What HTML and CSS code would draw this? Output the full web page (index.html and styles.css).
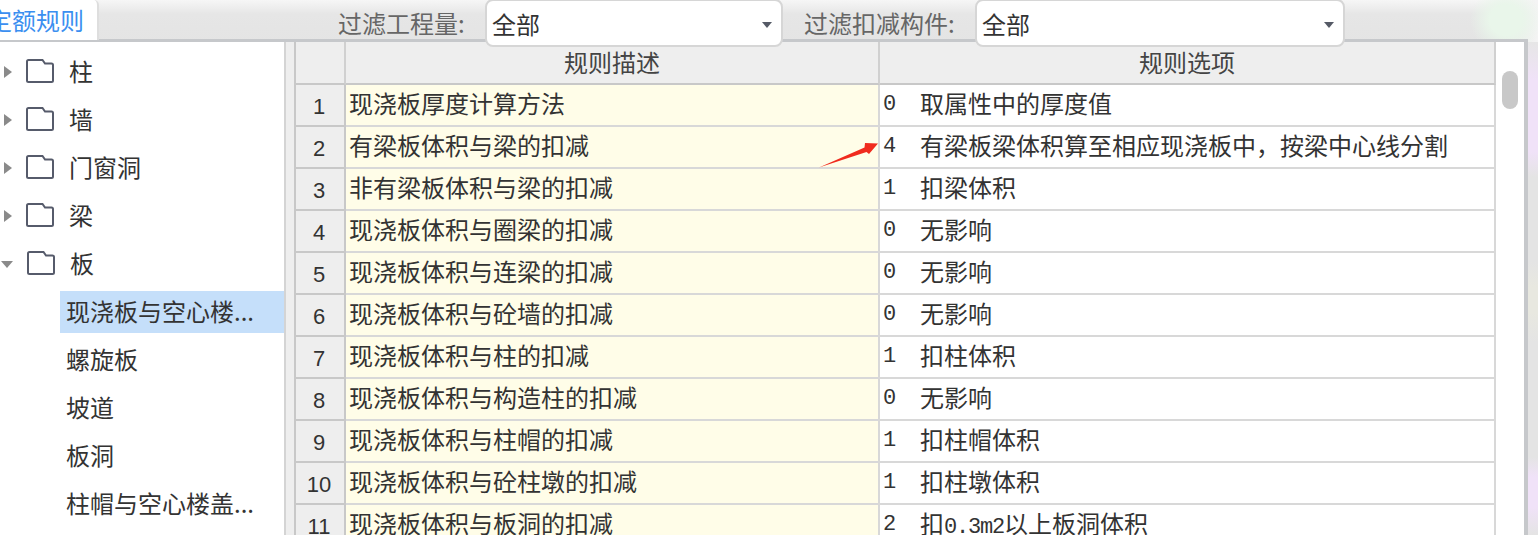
FILE: index.html
```html
<!DOCTYPE html>
<html lang="zh-CN">
<head>
<meta charset="utf-8">
<title>定额规则</title>
<link rel="stylesheet" href="styles.css">
</head>
<body>
<svg class="defs" width="0" height="0"><symbol id="folder" viewBox="0 0 28 24"><path d="M1 2.500a1.500 1.500 0 0 1 1.500-1.500h14l2.500 3.500h6.500a1.500 1.500 0 0 1 1.500 1.500v15.500a1.500 1.500 0 0 1-1.500 1.500h-23a1.500 1.500 0 0 1-1.500-1.500z"/></symbol></svg>
<div class="page">
  <header class="topbar">
    <div class="tab"><span class="tab-text">定额规则</span></div>
    <span class="filter-label first">过滤工程量:</span>
    <div class="combo combo-a"><span>全部</span><i class="caret"></i></div>
    <span class="filter-label second">过滤扣减构件:</span>
    <div class="combo combo-b"><span>全部</span><i class="caret"></i></div>
  </header>
  <main class="body">
    <nav class="tree">
      <div class="node"><i class="tri"></i><svg class="folder"><use href="#folder"/></svg><span>柱</span></div>
      <div class="node"><i class="tri"></i><svg class="folder"><use href="#folder"/></svg><span>墙</span></div>
      <div class="node"><i class="tri"></i><svg class="folder"><use href="#folder"/></svg><span>门窗洞</span></div>
      <div class="node"><i class="tri"></i><svg class="folder"><use href="#folder"/></svg><span>梁</span></div>
      <div class="node"><i class="tri open"></i><svg class="folder"><use href="#folder"/></svg><span>板</span></div>
      <div class="leaf selected"><span>现浇板与空心楼...</span></div>
      <div class="leaf"><span>螺旋板</span></div>
      <div class="leaf"><span>坡道</span></div>
      <div class="leaf"><span>板洞</span></div>
      <div class="leaf"><span>柱帽与空心楼盖...</span></div>
    </nav>
    <div class="splitter"></div>
    <section class="grid-wrap">
      <div class="rules">
        <div class="row head"><div class="cell"></div><div class="cell">规则描述</div><div class="cell">规则选项</div></div>
        <div class="row"><div class="cell no">1</div><div class="cell desc"><span>现浇板厚度计算方法</span></div><div class="cell opt"><b>0</b><span>取属性中的厚度值</span></div></div>
        <div class="row"><div class="cell no">2</div><div class="cell desc"><span>有梁板体积与梁的扣减</span></div><div class="cell opt"><b>4</b><span>有梁板梁体积算至相应现浇板中，按梁中心线分割</span></div></div>
        <div class="row"><div class="cell no">3</div><div class="cell desc"><span>非有梁板体积与梁的扣减</span></div><div class="cell opt"><b>1</b><span>扣梁体积</span></div></div>
        <div class="row"><div class="cell no">4</div><div class="cell desc"><span>现浇板体积与圈梁的扣减</span></div><div class="cell opt"><b>0</b><span>无影响</span></div></div>
        <div class="row"><div class="cell no">5</div><div class="cell desc"><span>现浇板体积与连梁的扣减</span></div><div class="cell opt"><b>0</b><span>无影响</span></div></div>
        <div class="row"><div class="cell no">6</div><div class="cell desc"><span>现浇板体积与砼墙的扣减</span></div><div class="cell opt"><b>0</b><span>无影响</span></div></div>
        <div class="row"><div class="cell no">7</div><div class="cell desc"><span>现浇板体积与柱的扣减</span></div><div class="cell opt"><b>1</b><span>扣柱体积</span></div></div>
        <div class="row"><div class="cell no">8</div><div class="cell desc"><span>现浇板体积与构造柱的扣减</span></div><div class="cell opt"><b>0</b><span>无影响</span></div></div>
        <div class="row"><div class="cell no">9</div><div class="cell desc"><span>现浇板体积与柱帽的扣减</span></div><div class="cell opt"><b>1</b><span>扣柱帽体积</span></div></div>
        <div class="row"><div class="cell no">10</div><div class="cell desc"><span>现浇板体积与砼柱墩的扣减</span></div><div class="cell opt"><b>1</b><span>扣柱墩体积</span></div></div>
        <div class="row"><div class="cell no">11</div><div class="cell desc"><span>现浇板体积与板洞的扣减</span></div><div class="cell opt"><b>2</b><span>扣<em>0.3m2</em>以上板洞体积</span></div></div>
      </div>
      <svg class="arrow" viewBox="0 0 66 30"><polygon points="4,27.500 49.500,7.500 50,3 63,3.500 54,14 51.500,12"/></svg>
      <div class="scrollbar"><div class="thumb"></div></div>
    </section>
    <div class="edge"></div>
    <div class="fringe"></div>
  </main>
</div>
</body>
</html>
```
FILE: styles.css
```css
* { box-sizing: border-box; }
html, body { margin: 0; padding: 0; background: #fff; }
body { font-family: "Noto Sans CJK SC", "Liberation Sans", sans-serif; color: #333; overflow: hidden; }
.defs { position: absolute; }
.page { width: 1538px; height: 535px; overflow: hidden; display: flex; flex-direction: column; }

.topbar {
  height: 42px; flex: none; display: flex; align-items: flex-start; position: relative; z-index: 2;
  background:
    radial-gradient(ellipse 36px 34px at 1506px 20px, #e9f6ea 0, #e9f6ea 45%, rgba(233,246,234,0) 100%),
    linear-gradient(to right, rgba(244,244,244,0) 1500px, #f4f4f4 1538px),
    linear-gradient(#f6f6f6 0, #e6e6e6 14px, #e4e4e4 100%);
}
.topbar::after { content: ""; position: absolute; left: 0; bottom: 0; width: 1528px; height: 3px; background: #c6c8cb; }
.tab {
  width: 99px; height: 40px; background: #fff; overflow: hidden; position: relative; z-index: 1;
  border-right: 2px solid #dedede; border-top-right-radius: 5px; flex: none;
  line-height: 40px; font-size: 24px; color: #3b8ff0; white-space: nowrap;
}
.tab-text { display: block; margin-left: -12px; }
.filter-label { font-size: 24px; line-height: 46px; color: #666; white-space: nowrap; flex: none; }
.first { margin-left: 239px; width: 147px; }
.second { margin-left: 21px; width: 171px; }
.combo {
  height: 48px; margin-top: -1px; background: #fff; flex: none; position: relative; z-index: 1;
  border: 2px solid #d6d6d6; border-radius: 8px;
  font-size: 24px; line-height: 46px; padding-left: 5px; color: #333;
}
.combo-a { width: 298px; }
.combo-b { width: 370px; }
.caret {
  position: absolute; right: 9px; top: 21px; width: 0; height: 0;
  border-left: 5px solid transparent; border-right: 5px solid transparent; border-top: 6px solid #555a66;
}

.body { flex: 1; display: flex; min-height: 0; }
.tree { width: 284px; flex: none; padding-top: 6px; background: #fff; display: flex; flex-direction: column; }
.node, .leaf { display: flex; align-items: center; font-size: 24px; color: #333; white-space: nowrap; flex: none; }
.node { height: 48px; }
.node span, .leaf span { padding-bottom: 4px; }
.leaf { height: 42px; margin: 3px 0 3px 60px; padding-left: 6px; }
.leaf.selected { background: #c5dffa; }
.tri {
  width: 0; height: 0; margin-left: 4px; flex: none;
  border-top: 6px solid transparent; border-bottom: 6px solid transparent; border-left: 8px solid #8a8a8a;
}
.tri.open {
  margin-left: 1px; margin-right: 0;
  border-left: 6px solid transparent; border-right: 6px solid transparent; border-top: 7px solid #8a8a8a; border-bottom: 0;
}
.folder { width: 28px; height: 24px; margin-left: 14px; margin-right: 15px; flex: none; fill: none; stroke: #565b6b; stroke-width: 2; position: relative; top: -1px; }

.splitter { width: 10px; flex: none; background: #eee; border-left: 2px solid #d4d4d4; }

.grid-wrap { width: 1230px; flex: none; position: relative; background: #fff; overflow: hidden; border-left: 2px solid #c8c8c8; }
.rules { width: 1200px; font-size: 24px; }
.row { display: grid; grid-template-columns: 50px 534px 616px; height: 42px; }
.cell { display: flex; align-items: center; padding-left: 3px; border-right: 2px solid #d8d8d8; border-bottom: 2px solid #d8d8d8; white-space: nowrap; overflow: hidden; color: #333; }
.cell span { padding-bottom: 5px; }
.head { height: 43px; }
.head .cell { background: #eee; justify-content: center; padding: 0 0 3px; color: #444; border-right-color: #d0d0d0; border-bottom-color: #c8c8c8; }
.cell.no { padding: 4px 2px 0 0; background: #eee; justify-content: center; border-right-color: #c8c8c8; border-bottom-color: #c8c8c8; font-family: "Liberation Sans", sans-serif; font-size: 22px; }
.cell.desc { background: #fffde8; }
.cell b { width: 37px; flex: none; font-weight: 400; font-family: "Liberation Mono", monospace; font-size: 22px; padding-bottom: 2px; }
.cell em { font-style: normal; font-family: "Liberation Mono", monospace; font-size: 22px; letter-spacing: -1.200px; }

.arrow { position: absolute; left: 519px; top: 98px; width: 66px; height: 30px; fill: #f02b1e; }
.scrollbar { position: absolute; left: 1200px; top: 0; bottom: 0; width: 28px; background: #fff; }
.thumb { position: absolute; left: 6px; top: 29px; width: 16px; height: 38px; border-radius: 8px; background: #c8c8c8; }
.edge { width: 4px; flex: none; background: #c6c8cb; }
.fringe {
  width: 10px; flex: none;
  background: linear-gradient(#e6e6e6 0, #f0e2f8 38px, #f0e2f8 110px, #e4e4e4 135px, #e4e4e4 220px, #e8e8e0 245px, #e8e8e0 270px, #e4e4e4 300px, #e4e4e4 415px, #f0e2f8 435px, #f0e2f8 465px, #e4e4e4 493px);
}
```
